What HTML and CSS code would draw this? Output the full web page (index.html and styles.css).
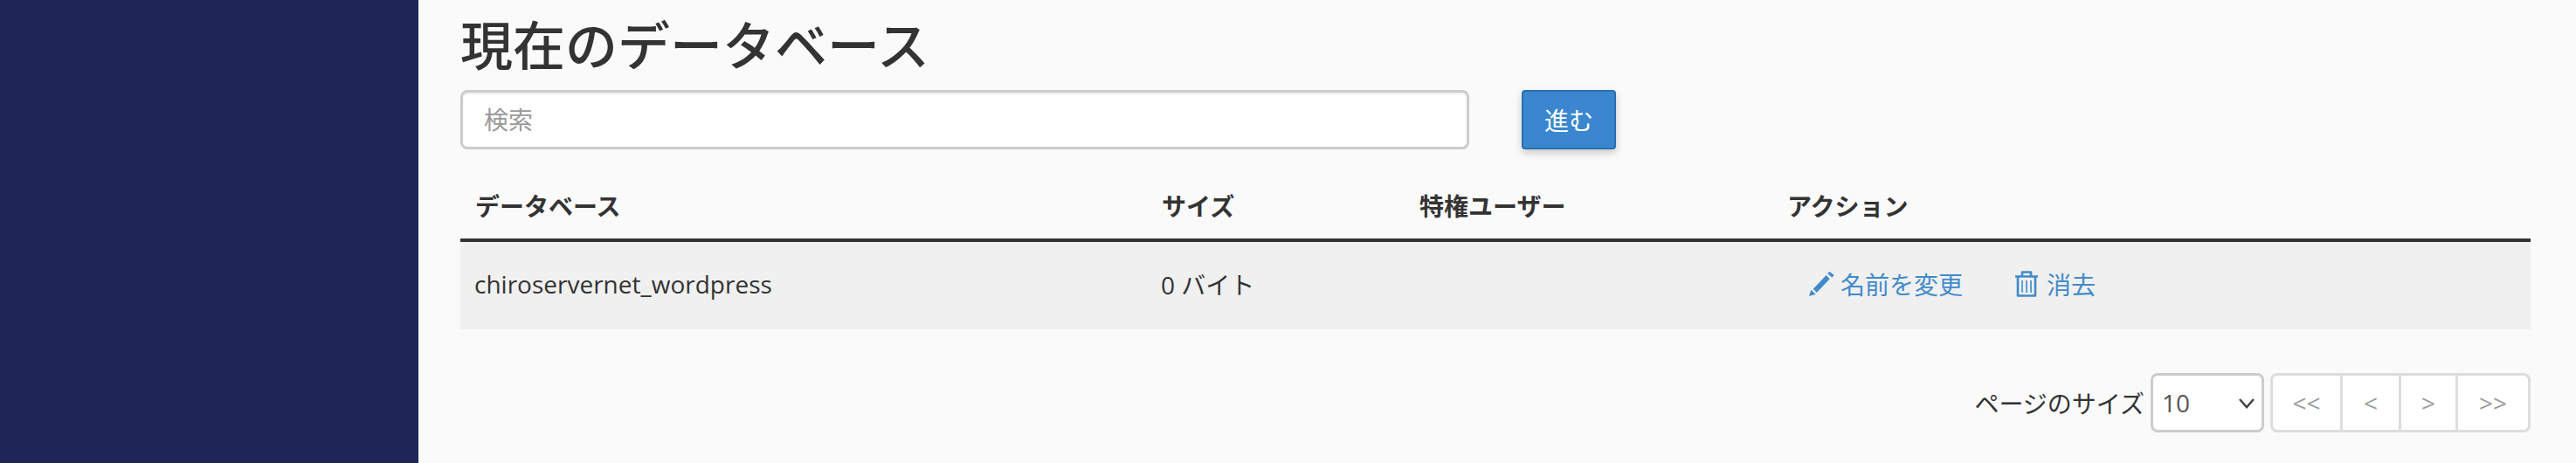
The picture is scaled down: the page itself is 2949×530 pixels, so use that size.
FILE: index.html
```html
<!DOCTYPE html>
<html lang="ja">
<head>
    <meta charset="UTF-8">
    <title>現在のデータベース</title>
    <link rel="stylesheet" href="styles.css">
</head>
<body>
    <aside class="sidebar"></aside>

    <main class="content">
        <h1>現在のデータベース</h1>

        <div class="search-row">
            <input type="text" class="search-input" placeholder="検索">
            <button class="go-btn">進む</button>
        </div>

        <table class="db-table">
            <thead>
                <tr>
                    <th class="col-name">データベース</th>
                    <th class="col-size">サイズ</th>
                    <th class="col-users">特権ユーザー</th>
                    <th>アクション</th>
                </tr>
            </thead>
            <tbody>
                <tr>
                    <td>chiroservernet_wordpress</td>
                    <td>0 バイト</td>
                    <td></td>
                    <td>
                        <div class="actions">
                            <a class="action rename" href="#">
                                <svg class="icon" viewBox="0 0 29 28" width="29" height="28">
                                    <path d="M0 28 L2.3 20.7 L7.7 25.7 Z M4.7 19.7 L19.7 4 L23.7 8.3 L8.7 24 Z M21 1.7 L23.7 0 L28.7 4 L26.3 6.7 Z"/>
                                </svg>
                                名前を変更
                            </a>
                            <a class="action" href="#">
                                <svg class="icon trash" viewBox="0 0 26 30" width="26" height="30">
                                    <path d="M0 6.5 H26 M8 6.5 V1.5 H18 V6.5 M3 6.5 V28.5 H23 V6.5"/>
                                    <path class="trash-bars" d="M8 11 V25 M13 11 V25 M18 11 V25"/>
                                </svg>
                                消去
                            </a>
                        </div>
                    </td>
                </tr>
            </tbody>
        </table>

        <div class="pager-row">
            <label class="page-label" for="page-size">ページのサイズ</label>
            <div class="select-wrap">
                <select id="page-size" class="page-select">
                    <option>10</option>
                </select>
                <svg class="chevron" viewBox="0 0 18 12" width="18" height="12">
                    <path d="M1 1 L9 10 L17 1"/>
                </svg>
            </div>
            <div class="pager">
                <button class="page-btn first">&lt;&lt;</button>
                <button class="page-btn prev">&lt;</button>
                <button class="page-btn next">&gt;</button>
                <button class="page-btn last">&gt;&gt;</button>
            </div>
        </div>
    </main>
</body>
</html>
```

FILE: styles.css
```css
* {
    box-sizing: border-box;
}

html, body {
    height: 100%;
}

body {
    margin: 0;
    display: flex;
    overflow: hidden;
    background: #fafafa;
    color: #333;
    font-family: "Open Sans", "Noto Sans CJK JP", sans-serif;
    font-size: 28px;
}

.sidebar {
    width: 479px;
    flex-shrink: 0;
    background: #1d2655;
}

.content {
    width: 2370px;
    margin-left: 48px;
}

h1 {
    margin: 0;
    height: 103px;
    padding-top: 12px;
    font-size: 60px;
    font-weight: 500;
    line-height: 80px;
}

.search-row {
    display: flex;
    gap: 60px;
    height: 68px;
}

.search-input {
    width: 1155px;
    padding: 0 24px;
    border: 3px solid #ccc;
    border-radius: 8px;
    background: #fff;
    box-shadow: inset 0 2px 2px rgba(0, 0, 0, 0.07);
    font: inherit;
}

.search-input::placeholder {
    color: #999;
}

.go-btn {
    width: 108px;
    border: 2px solid #2a6eb0;
    border-radius: 4px;
    background: #3a87cf;
    color: #fff;
    box-shadow: 0 4px 10px rgba(0, 0, 0, 0.2);
    font: inherit;
}

.db-table {
    width: 100%;
    margin-top: 34px;
    border-collapse: collapse;
    table-layout: fixed;
}

.col-name {
    width: 786px;
}

.col-size {
    width: 295px;
}

.col-users {
    width: 421px;
}

th {
    height: 70px;
    padding: 0 16px 8px 17px;
    border-bottom: 4px solid #333;
    font-weight: 700;
    text-align: left;
}

td {
    height: 102px;
    padding: 0 16px 5px;
    background: #f0f0f0;
}

.actions {
    display: flex;
    gap: 60px;
    margin-left: 26px;
}

.action {
    display: flex;
    align-items: center;
    gap: 8px;
    color: #428bca;
    text-decoration: none;
}

.icon {
    fill: #428bca;
}

.rename .icon {
    margin-right: -1px;
}

.trash {
    margin-right: 2px;
    fill: none;
    stroke: #428bca;
    stroke-width: 2.6;
    stroke-linejoin: round;
}

.trash-bars {
    stroke-width: 1.6;
}

.pager-row {
    display: flex;
    justify-content: flex-end;
    align-items: center;
    gap: 7px;
    margin-top: 50px;
    height: 68px;
}

.select-wrap {
    position: relative;
    width: 130px;
    height: 68px;
}

.page-select {
    width: 100%;
    height: 100%;
    padding: 0 10px;
    border: 3px solid #ccc;
    border-radius: 8px;
    background: #fff;
    color: #555;
    font: inherit;
    appearance: none;
}

.chevron {
    position: absolute;
    right: 11px;
    top: 29px;
    fill: none;
    stroke: #444;
    stroke-width: 2.5;
    pointer-events: none;
}

.pager {
    display: flex;
    height: 68px;
}

.page-btn {
    height: 100%;
    border: 3px solid #ddd;
    border-left-width: 0;
    background: #fff;
    color: #999;
    font: inherit;
}

.prev {
    width: 67px;
}

.next {
    width: 65px;
}

.first {
    width: 83px;
    border-left-width: 3px;
    border-radius: 8px 0 0 8px;
}

.last {
    width: 83px;
    border-radius: 0 8px 8px 0;
}
```
